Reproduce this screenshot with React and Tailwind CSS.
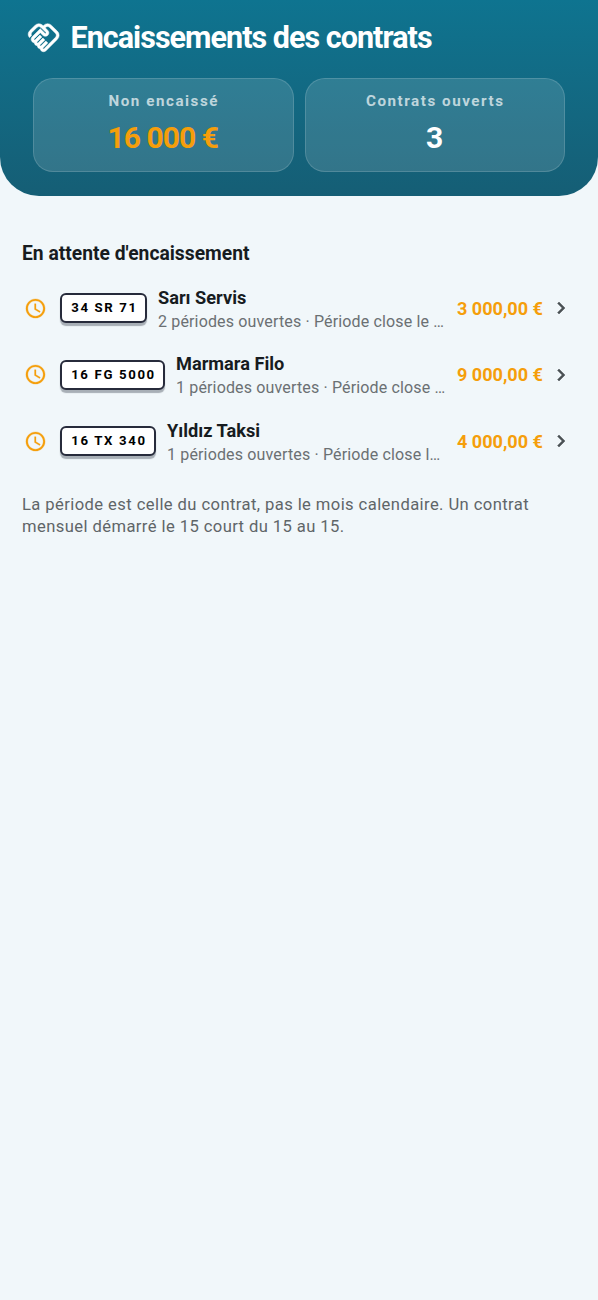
import { MdOutlineHandshake, MdAccessTime, MdOutlineChevronRight } from "react-icons/md";

const contracts = [
  { plate: "34 SR 71", plateWidth: "w-[87px]", name: "Sarı Servis", detail: "2 périodes ouvertes · Période close le …", amount: "3\u00a0000,00\u00a0€" },
  { plate: "16 FG 5000", plateWidth: "w-[105px]", name: "Marmara Filo", detail: "1 périodes ouvertes · Période close …", amount: "9\u00a0000,00\u00a0€" },
  { plate: "16 TX 340", plateWidth: "w-[96px]", name: "Yıldız Taksi", detail: "1 périodes ouvertes · Période close l…", amount: "4\u00a0000,00\u00a0€" },
];

function Stat({ label, value, color }) {
  return (
    <div className="flex h-[94px] flex-1 flex-col items-center rounded-[20px] border border-white/15 bg-white/[0.13] pt-[12px]">
      <div className="pl-[1px] text-[15.2px] leading-[21px] font-bold tracking-[1.53px] text-white/70">{label}</div>
      <div className={`mt-[8px] pr-[1px] text-[30px] leading-[36px] font-bold tracking-[-0.95px] ${color}`}>{value}</div>
    </div>
  );
}

function ContractRow({ plate, plateWidth, name, detail, amount }) {
  return (
    <div className="flex h-[66.5px] items-center whitespace-nowrap">
      <MdAccessTime className="ml-[2px] size-[23px] shrink-0 stroke-[#f59e0b] stroke-[0.3] text-[#f59e0b] [&>path[fill=none]]:stroke-none" />
      <div className={`ml-[13px] flex h-[30px] shrink-0 items-center justify-center rounded-[6px] border-2 border-[#272b3b] bg-white pl-[2px] text-[13.2px] font-bold tracking-[1.65px] text-black shadow-[0_3px_1px_rgba(31,41,55,0.35)] ${plateWidth}`}>
        {plate}
      </div>
      <div className="ml-[11px] min-w-0 flex-1 pt-[2.5px]">
        <div className="text-[18.2px] leading-[24px] font-bold text-[#171c1f]">{name}</div>
        <div className="text-[16px] leading-[24px] tracking-[0.15px] text-[#6b7073]">{detail}</div>
      </div>
      <div className="shrink-0 text-[18.1px] font-bold text-[#f59e0b]">{amount}</div>
      <MdOutlineChevronRight
        strokeLinejoin="round"
        className="mr-[3px] ml-[6px] size-[24px] shrink-0 stroke-[#4b5154] stroke-[0.5] text-[#4b5154] [&>path[fill=none]]:stroke-none"
      />
    </div>
  );
}

export default function App() {
  return (
    <div className="min-h-[1300px] bg-[#f1f7fa] font-['Roboto',sans-serif]">
      <header className="h-[196px] rounded-b-[39px] bg-linear-to-b from-[#0e7490] to-[#155e75] px-[33px] pt-[20px]">
        <div className="-ml-[6px] flex h-[36px] items-center gap-[10px]">
          <MdOutlineHandshake className="size-[33.5px] shrink-0 stroke-white stroke-[0.4] text-white [&>path[fill=none]]:stroke-none" />
          <h1 className="text-[30.5px] leading-[36px] font-bold tracking-[-0.97px] whitespace-nowrap text-white">Encaissements des contrats</h1>
        </div>
        <div className="mt-[22px] flex gap-[11px]">
          <Stat label="Non encaissé" value={"16\u00a0000\u00a0€"} color="text-[#f59e0b]" />
          <Stat label="Contrats ouverts" value="3" color="text-white" />
        </div>
      </header>
      <main className="px-[22px] pt-[46px]">
        <h2 className="text-[19.3px] leading-[24px] font-bold text-[#171c1f]">En attente d'encaissement</h2>
        <div className="mt-[9px]">
          {contracts.map((contract) => (
            <ContractRow key={contract.plate} {...contract} />
          ))}
        </div>
        <p className="mt-[19px] text-[16.6px] leading-[22px] tracking-[0.41px] text-[#5f6568]">
          La période est celle du contrat, pas le mois calendaire. Un contrat
          <br />
          mensuel démarré le 15 court du 15 au 15.
        </p>
      </main>
    </div>
  );
}
